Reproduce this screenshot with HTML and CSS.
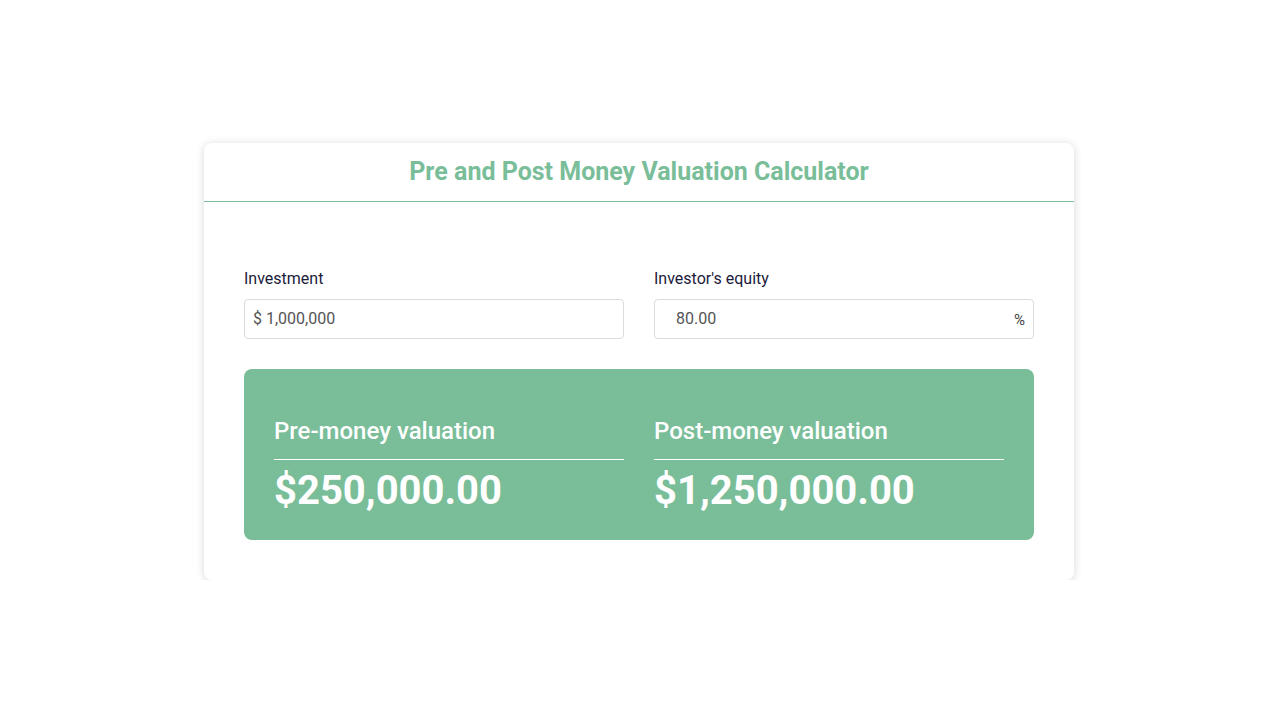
FILE: index.html
```html
<!DOCTYPE html>
<html>
<head>
<meta charset="utf-8">
<link rel="stylesheet" href="styles.css">
</head>
<body>
<div class="card">
  <div class="card-header">
    <h1 class="title">Pre and Post Money Valuation Calculator</h1>
  </div>
  <div class="card-body">
    <div class="fields">
      <div class="field">
        <label class="label">Investment</label>
        <div class="input">
          <span class="value">$ 1,000,000</span>
        </div>
      </div>
      <div class="field">
        <label class="label">Investor's equity</label>
        <div class="input input-equity">
          <span class="value">80.00</span>
          <span class="suffix">%</span>
        </div>
      </div>
    </div>
    <div class="results">
      <div class="result">
        <h2 class="result-title">Pre-money valuation</h2>
        <div class="result-value">$250,000.00</div>
      </div>
      <div class="result">
        <h2 class="result-title">Post-money valuation</h2>
        <div class="result-value">$1,250,000.00</div>
      </div>
    </div>
  </div>
</div>
</body>
</html>
```
FILE: styles.css
```css
* { box-sizing: border-box; }
html, body { margin: 0; padding: 0; background: #fff; }
body {
  font-family: Roboto, "Liberation Sans", Arial, sans-serif;
  padding-top: 143px;
}
.card {
  width: 870px;
  margin-left: 204px;
  background: #fff;
  border-radius: 8px;
  box-shadow: 0 1px 8px rgba(0,0,0,0.16);
}
.card-header {
  height: 59px;
  border-bottom: 1px solid #7fbc9a;
  display: flex;
  align-items: center;
  justify-content: center;
}
.title {
  margin: 0;
  font-size: 25px;
  font-weight: 700;
  color: #79be99;
  line-height: 28px;
}
.card-body {
  padding: 65px 40px 40px;
}
.fields {
  display: grid;
  grid-template-columns: 1fr 1fr;
  gap: 30px;
}
.label {
  display: block;
  font-size: 16px;
  line-height: 24px;
  color: #1b1b3a;
  margin-bottom: 8px;
}
.input {
  height: 40px;
  border: 1px solid #dcdcdc;
  border-radius: 4px;
  display: flex;
  align-items: center;
  padding: 0 8px 1px;
  font-size: 16px;
  color: #555;
}
.input-equity { padding-left: 21px; }
.input-equity .value { flex: 1; }
.suffix { font-size: 15px; color: #444; padding-top: 2px; }
.results {
  margin-top: 30px;
  background: #79bd99;
  border-radius: 8px;
  padding: 48px 30px 25px;
  display: grid;
  grid-template-columns: 1fr 1fr;
  gap: 30px;
  color: #fff;
}
.result-title {
  margin: 0;
  font-size: 24px;
  font-weight: 500;
  line-height: 28px;
  padding-bottom: 14px;
  border-bottom: 1px solid #fff;
}
.result-value {
  margin-top: 7px;
  font-size: 40px;
  font-weight: 700;
  line-height: 48px;
}
```
